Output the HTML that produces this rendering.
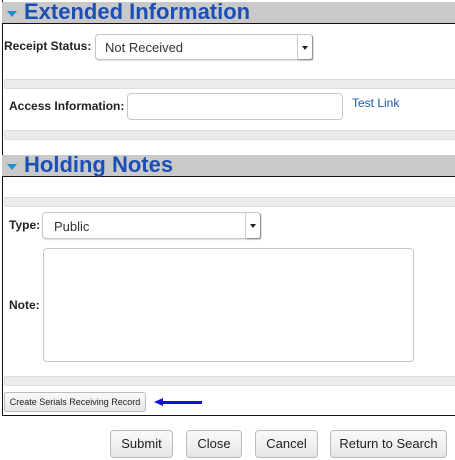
<!DOCTYPE html>
<html><head><style>
*{box-sizing:border-box}
body{margin:0;width:455px;height:460px;background:#fff;font-family:"Liberation Sans",Arial,sans-serif;position:relative;overflow:hidden}
.a{position:absolute}
.hdr{left:2px;width:453px;height:22px;background:#c9c9c9;border-bottom:1px solid #111}
.hdr span{position:absolute;left:22px;top:-3px;font-size:22px;font-weight:bold;color:#1b4fb5;letter-spacing:0}
.tri{position:absolute;left:5px;top:9px;width:0;height:0;border-left:5px solid transparent;border-right:5px solid transparent;border-top:6px solid #1f8fd2}
.bar{left:4px;width:451px;height:10px;background:#ececec;border:1px solid #ddd;border-right:none;border-radius:2px 0 0 2px}
.lbl{font-size:12px;font-weight:bold;color:#222}
.sel{background:#fff;border:1px solid #c8c8c8;border-radius:4px;font-size:13px;color:#333;padding-left:9px;box-shadow:0 1px 1px #ddd}
.sel i{position:absolute;right:0;top:0;bottom:0;width:15px;border-left:1px solid #ccc;box-shadow:1px 1px 1px #888}
.sel i:after{content:"";position:absolute;left:4px;top:11px;border-left:3px solid transparent;border-right:3px solid transparent;border-top:4px solid #222}
.inp{background:#fff;border:1px solid #c8c8c8;border-radius:4px}
.btn{top:430px;height:28px;border:1px solid #bbb;border-radius:4px;background:linear-gradient(#fafafa,#e6e6e6);font-size:13px;color:#222;text-align:center;line-height:26px}
</style></head><body>
<div class="a" style="left:2px;top:0;width:1px;height:416px;background:#111"></div>
<div class="a" style="left:2px;top:415px;width:453px;height:1px;background:#111"></div>
<div class="a hdr" style="top:2px"><div class="tri"></div><span>Extended Information</span></div>
<div class="a lbl" style="left:4px;top:39px">Receipt Status:</div>
<div class="a sel" style="left:95px;top:34px;width:218px;height:26px;line-height:26px">Not Received<i></i></div>
<div class="a bar" style="top:79px"></div>
<div class="a lbl" style="left:9px;top:99px">Access Information:</div>
<div class="a inp" style="left:127px;top:93px;width:216px;height:27px"></div>
<div class="a" style="left:352px;top:96px;font-size:12px;color:#1a55b8">Test Link</div>
<div class="a bar" style="top:130px"></div>
<div class="a hdr" style="top:155px"><div class="tri"></div><span>Holding Notes</span></div>
<div class="a bar" style="top:197px"></div>
<div class="a lbl" style="left:9px;top:218px">Type:</div>
<div class="a sel" style="left:42px;top:212px;width:219px;height:27px;line-height:27px;padding-left:11px">Public<i></i></div>
<div class="a inp" style="left:43px;top:248px;width:371px;height:114px"></div>
<div class="a lbl" style="left:9px;top:298px">Note:</div>
<div class="a bar" style="top:376px"></div>
<div class="a" style="left:4px;top:392px;width:142px;height:20px;border:1px solid #bbb;border-radius:3px;background:linear-gradient(#fafafa,#e6e6e6);font-size:9px;line-height:18px;text-align:center;color:#222">Create Serials Receiving Record</div>
<div class="a" style="left:162px;top:401px;width:40px;height:3px;background:#1010e0"></div>
<div class="a" style="left:154px;top:398px;border-right:9px solid #1010e0;border-top:4px solid transparent;border-bottom:4px solid transparent"></div>
<div class="a btn" style="left:110px;width:63px">Submit</div>
<div class="a btn" style="left:186px;width:56px">Close</div>
<div class="a btn" style="left:255px;width:63px">Cancel</div>
<div class="a btn" style="left:330px;width:117px">Return to Search</div>
</body></html>
